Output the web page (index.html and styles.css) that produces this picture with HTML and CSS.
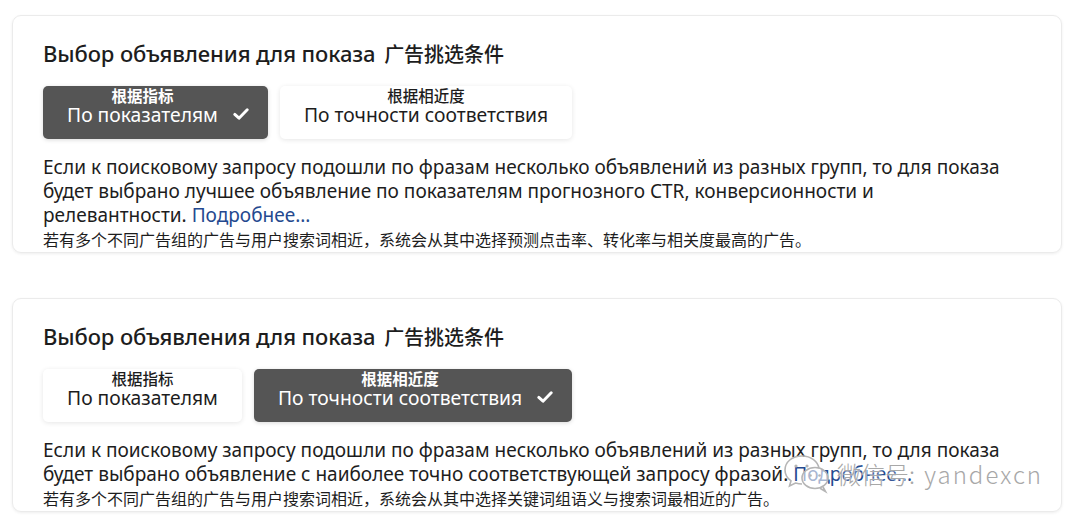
FILE: index.html
```html
<!DOCTYPE html>
<html lang="ru">
<head>
<meta charset="utf-8">
<link rel="stylesheet" href="styles.css">
</head>
<body>
<main class="page">
  <section class="card">
    <h2 class="title">Выбор объявления для показа <span class="title-zh">广告挑选条件</span></h2>
    <div class="options">
      <div class="opt opt-active">
        <div class="opt-text">
          <span class="opt-zh">根据指标</span>
          <span class="opt-ru">По показателям</span>
        </div>
        <svg class="check" viewBox="0 0 16 12" width="16" height="12"><path d="M1.8 6.4 L6 10.2 L14.2 1.8" fill="none" stroke="#fff" stroke-width="2.9" stroke-linecap="round" stroke-linejoin="round"/></svg>
      </div>
      <div class="opt">
        <div class="opt-text">
          <span class="opt-zh">根据相近度</span>
          <span class="opt-ru">По точности соответствия</span>
        </div>
      </div>
    </div>
    <p class="desc">Если к поисковому запросу подошли по фразам несколько объявлений из разных групп, то для показа будет выбрано лучшее объявление по показателям прогнозного CTR, конверсионности и релевантности. <a class="more" href="#">Подробнее...</a></p>
    <p class="desc-zh">若有多个不同广告组的广告与用户搜索词相近，系统会从其中选择预测点击率、转化率与相关度最高的广告。</p>
  </section>

  <section class="card">
    <h2 class="title">Выбор объявления для показа <span class="title-zh">广告挑选条件</span></h2>
    <div class="options">
      <div class="opt">
        <div class="opt-text">
          <span class="opt-zh">根据指标</span>
          <span class="opt-ru">По показателям</span>
        </div>
      </div>
      <div class="opt opt-active">
        <div class="opt-text">
          <span class="opt-zh">根据相近度</span>
          <span class="opt-ru">По точности соответствия</span>
        </div>
        <svg class="check" viewBox="0 0 16 12" width="16" height="12"><path d="M1.8 6.4 L6 10.2 L14.2 1.8" fill="none" stroke="#fff" stroke-width="2.9" stroke-linecap="round" stroke-linejoin="round"/></svg>
      </div>
    </div>
    <p class="desc">Если к поисковому запросу подошли по фразам несколько объявлений из разных групп, то для показа будет выбрано объявление с наиболее точно соответствующей запросу фразой. <a class="more" href="#">Подробнее...</a></p>
    <p class="desc-zh">若有多个不同广告组的广告与用户搜索词相近，系统会从其中选择关键词组语义与搜索词最相近的广告。</p>
  </section>
</main>
<div class="watermark">
  <svg class="wm-icon" viewBox="0 0 48 42" width="48" height="42">
    <path d="M19 4 C9 4 2 10 2 18 C2 22.5 4.3 26.3 8 28.8 L6.5 34 L12.5 31 C14.5 31.6 16.7 32 19 32" fill="none" stroke="#b5b5b5" stroke-width="1.6"/>
    <path d="M19 4 C28 4 35 9.5 36 16.5" fill="none" stroke="#b5b5b5" stroke-width="1.6"/>
    <ellipse cx="32" cy="26" rx="13" ry="10.5" fill="rgba(255,255,255,0.6)" stroke="#b5b5b5" stroke-width="1.6"/>
    <path d="M40 35 L42.5 39.5 L37 36.2" fill="none" stroke="#b5b5b5" stroke-width="1.6"/>
    <circle cx="13" cy="14" r="1.6" fill="#b5b5b5"/>
    <circle cx="24" cy="14" r="1.6" fill="#b5b5b5"/>
    <circle cx="27.5" cy="23.5" r="1.3" fill="#b5b5b5"/>
    <circle cx="36.5" cy="23.5" r="1.3" fill="#b5b5b5"/>
  </svg>
  <span class="wm-text">微信号<span class="wm-id">: yandexcn</span></span>
</div>
</body>
</html>
```

FILE: styles.css
```css
* { box-sizing: border-box; }
html, body { margin: 0; padding: 0; background: #fff; }
body {
  font-family: "Noto Sans", "Noto Sans CJK SC", sans-serif;
  color: #1f1f1f;
  width: 1076px;
  height: 524px;
  overflow: hidden;
  position: relative;
}
.page {
  padding: 15px 14px 0 12px;
  display: flex;
  flex-direction: column;
  gap: 45px;
}
.card {
  border: 1px solid #ebebeb;
  border-radius: 9px;
  box-shadow: 0 1px 3px rgba(0,0,0,0.07);
  padding: 23px 30px 2px;
}
.title {
  margin: 0;
  font-size: 22px;
  line-height: 28px;
  font-weight: 500;
  color: #1d1d1d;
  letter-spacing: -0.1px;
}
.title-zh {
  font-family: "Noto Sans CJK SC", sans-serif;
  font-size: 20px;
  font-weight: 500;
  margin-left: 3px;
  letter-spacing: 0;
}
.options {
  display: flex;
  gap: 12px;
  margin-top: 18px;
}
.opt {
  height: 53px;
  padding: 1px 24px 0;
  border-radius: 5px;
  background: #fff;
  box-shadow: 0 1px 5px rgba(0,0,0,0.10);
  display: flex;
  align-items: flex-start;
  gap: 15px;
  color: #1d1d1d;
}
.opt-active {
  background: #555555;
  color: #fff;
  box-shadow: 0 1px 4px rgba(0,0,0,0.15);
  padding-right: 19px;
}
.opt-text {
  display: flex;
  flex-direction: column;
  align-items: center;
}
.opt-zh {
  font-family: "Noto Sans CJK SC", sans-serif;
  font-size: 15.5px;
  line-height: 17px;
  font-weight: 700;
}
.opt:not(.opt-active) .opt-zh { font-weight: 500; }
.opt-ru {
  font-size: 19.3px;
  line-height: 21px;
}
.check { margin-top: 21px; flex: none; }
.desc {
  margin: 16px 0 0;
  max-width: 968px;
  font-size: 19.05px;
  line-height: 24px;
  color: #1d1d1d;
}
.more { color: #24498f; text-decoration: none; }
.desc-zh {
  margin: 1px 0 0;
  font-family: "Noto Sans CJK SC", sans-serif;
  font-size: 16px;
  line-height: 22px;
  color: #1d1d1d;
}
.watermark {
  position: absolute;
  left: 783px;
  top: 452px;
  display: flex;
  align-items: center;
  gap: 6px;
}
.wm-text {
  font-family: "Noto Sans CJK SC", sans-serif;
  font-weight: 300;
  font-size: 24px;
  color: #a8a8a8;
  text-shadow: 0 0 2px #fff, 0 0 2px #fff;
}
.wm-id { letter-spacing: 2px; }
```
